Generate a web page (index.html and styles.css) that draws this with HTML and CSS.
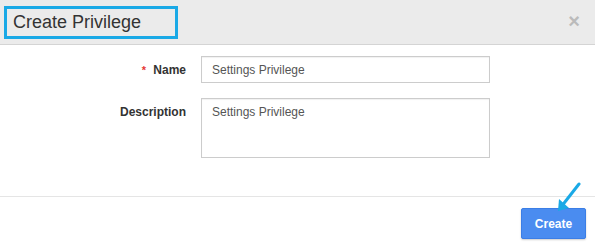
FILE: index.html
```html
<!DOCTYPE html>
<html lang="en">
<head>
  <meta charset="UTF-8">
  <title>Create Privilege</title>
  <link rel="stylesheet" href="styles.css">
</head>
<body>
  <div class="modal">
    <header class="modal-header">
      <h3 class="modal-title">Create Privilege</h3>
      <span class="close">&times;</span>
    </header>

    <div class="modal-body">
      <div class="form-row">
        <label class="form-label"><span class="required">*</span> Name</label>
        <input class="form-input" type="text" value="Settings Privilege">
      </div>
      <div class="form-row">
        <label class="form-label">Description</label>
        <textarea class="form-input form-textarea">Settings Privilege</textarea>
      </div>
    </div>

    <footer class="modal-footer">
      <button class="btn-create">Create</button>
      <!-- pointer arrow annotation -->
      <svg class="pointer" width="30" height="32" viewBox="0 0 30 32">
        <path d="M23 2 L5 25" stroke="#1aa9e6" stroke-width="3" stroke-linecap="round" fill="none"/>
        <path d="M2 29 L3 17 L13 26 Z" fill="#1aa9e6"/>
      </svg>
    </footer>
  </div>
</body>
</html>
```

FILE: styles.css
```css
body {
  margin: 0;
  font-family: "Liberation Sans", Arial, sans-serif;
  color: #333;
  background-color: #fff;
}

.modal {
  width: 595px;
  height: 246px;
  display: flex;
  flex-direction: column;
}

.modal-header {
  height: 44px;
  background-color: #ebebeb;
  border-bottom: 1px solid #d4d4d4;
  display: flex;
  align-items: center;
  justify-content: space-between;
  padding: 0 15px 0 4px;
}

.modal-title {
  margin: 0;
  font-size: 18px;
  font-weight: normal;
  color: #333;
  border: 3px solid #1aa9e6;
  width: 162px;
  height: 27px;
  line-height: 26px;
  padding-left: 6px;
  margin-top: 1px;
}

.close {
  font-size: 20px;
  font-weight: bold;
  color: #bbb;
  line-height: 1;
  margin-top: -2px;
}

.modal-body {
  padding: 11px 0 0;
  height: 140px;
  border-bottom: 1px solid #e5e5e5;
}

.form-row {
  display: flex;
  align-items: flex-start;
  margin-bottom: 15px;
}

.form-label {
  width: 186px;
  text-align: right;
  font-size: 12px;
  font-weight: bold;
  color: #333;
  padding-top: 7px;
  margin-right: 15px;
}

.required {
  color: #e53935;
  font-size: 11px;
  margin-right: 4px;
}

.form-input {
  width: 289px;
  height: 27px;
  box-sizing: border-box;
  border: 1px solid #ccc;
  box-shadow: inset 0 1px 1px rgba(0,0,0,0.06);
  padding: 0 10px;
  font-family: "Liberation Sans", Arial, sans-serif;
  font-size: 12px;
  color: #555;
  outline: none;
  margin: 0;
}

.form-textarea {
  height: 60px;
  padding-top: 6px;
  resize: none;
}

.modal-footer {
  position: relative;
  flex: 1;
  display: flex;
  justify-content: flex-end;
  align-items: flex-start;
  padding: 11px 9px 0 0;
}

.btn-create {
  width: 65px;
  height: 31px;
  background-color: #4a8cf0;
  border: 1px solid #3b7ee6;
  border-radius: 2px;
  box-shadow: 0 1px 2px rgba(0,0,0,0.2);
  color: #fff;
  font-family: "Liberation Sans", Arial, sans-serif;
  font-size: 12px;
  font-weight: bold;
  cursor: pointer;
}

.pointer {
  position: absolute;
  left: 556px;
  top: -15px;
}
```
